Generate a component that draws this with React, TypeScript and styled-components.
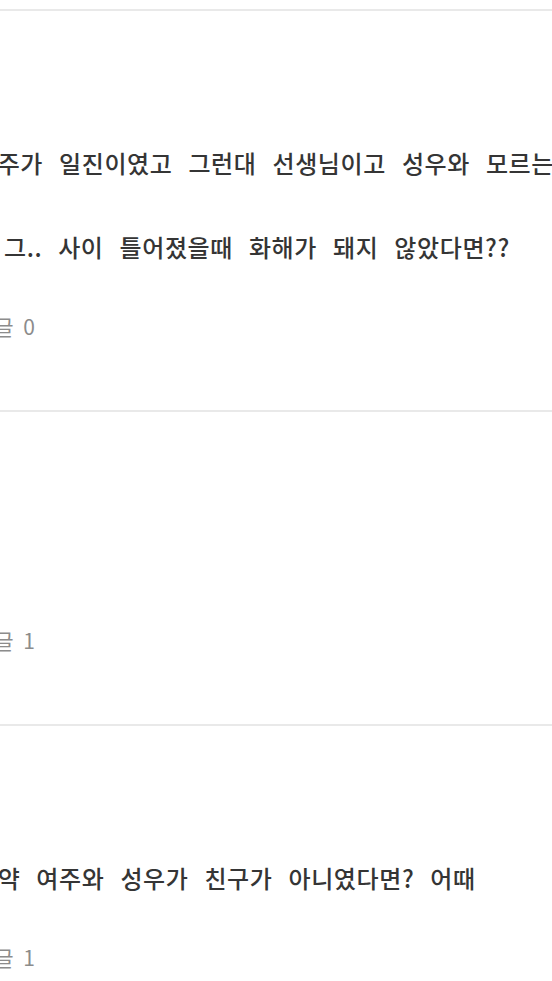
import React from "react";
import styled, { createGlobalStyle } from "styled-components";

const Global = createGlobalStyle`
  html, body {
    margin: 0;
    padding: 0;
    background: #ffffff;
    overflow: hidden;
  }
  body {
    font-family: "Noto Sans CJK KR", "Noto Sans", sans-serif;
  }
`;

const List = styled.div`
  padding-top: 9px;
  width: 552px;
  overflow: hidden;
`;

const Item = styled.section`
  border-top: 2px solid #e9e9e9;
  padding: 110px 0 47px;
  overflow: hidden;
`;

const Content = styled.div`
  margin-left: -25px;
  white-space: nowrap;
`;

const Line = styled.p<{ $indent?: number }>`
  margin: 0;
  padding-left: ${(p) => p.$indent ?? 0}px;
  font-size: 24px;
  font-weight: 500;
  line-height: 84px;
  color: #353535;
  word-spacing: 10px;
  letter-spacing: 0.6px;
`;

const Blank = styled.div`
  height: 81px;
`;

const Comments = styled.div`
  font-size: 21px;
  line-height: 74px;
  color: #8c8c8c;
  word-spacing: 5px;
`;

type Post = { lines: { text: string; indent?: number }[]; comments: number };

const posts: Post[] = [
  {
    lines: [
      { text: "여주가 일진이였고 그런대 선생님이고 성우와 모르는사이면?" },
      { text: "그.. 사이 틀어졌을때 화해가 돼지 않았다면??", indent: 29 },
    ],
    comments: 0,
  },
  { lines: [], comments: 1 },
  { lines: [{ text: "만약 여주와 성우가 친구가 아니였다면? 어때" }], comments: 1 },
];

export default function App() {
  return (
    <>
      <Global />
      <List>
        {posts.map((p, i) => (
          <Item key={i}>
            <Content>
              {p.lines.length === 0 ? (
                <Blank />
              ) : (
                p.lines.map((l, j) => (
                  <Line key={j} $indent={l.indent}>
                    {l.text}
                  </Line>
                ))
              )}
              <Comments>댓글 {p.comments}</Comments>
            </Content>
          </Item>
        ))}
      </List>
    </>
  );
}
